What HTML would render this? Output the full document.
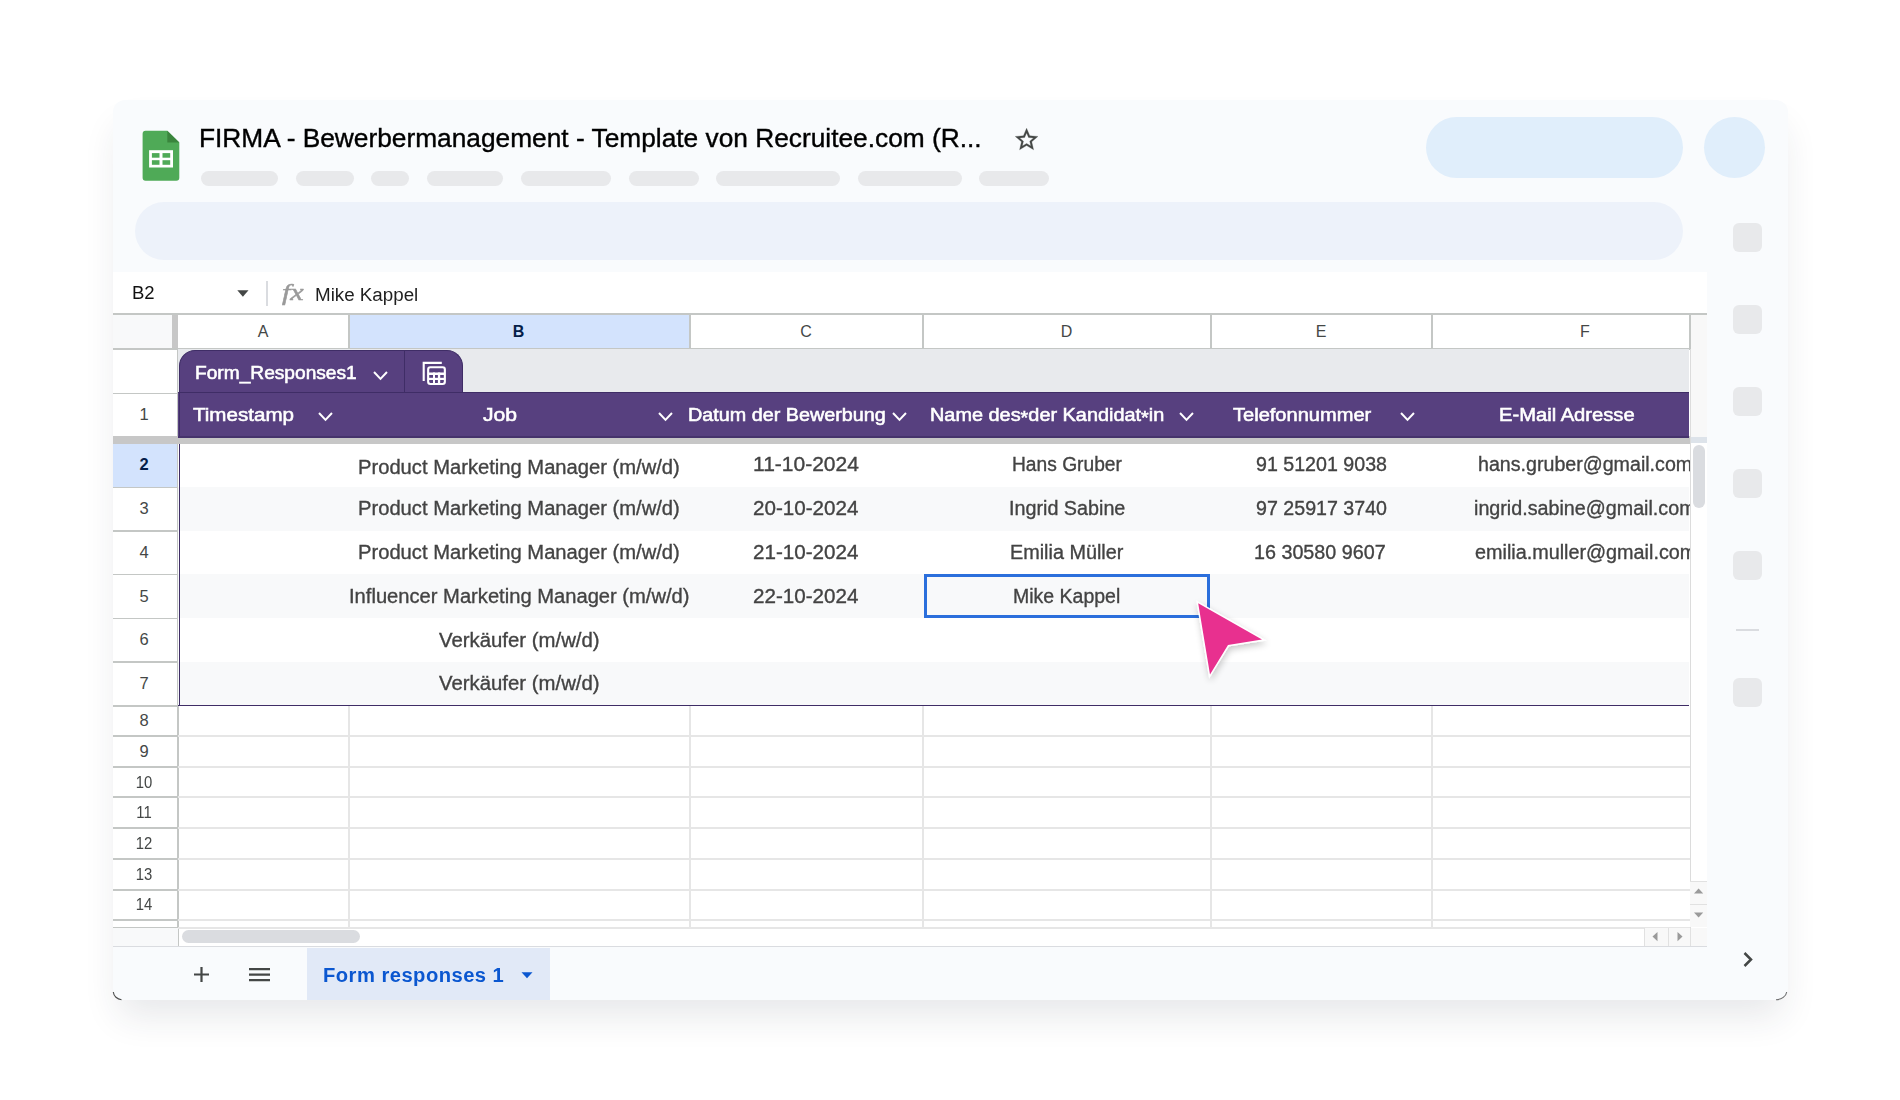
<!DOCTYPE html>
<html><head><meta charset="utf-8"><style>
html,body{margin:0;padding:0;width:1900px;height:1100px;background:#ffffff;overflow:hidden;}
body{position:relative;font-family:'Liberation Sans', sans-serif;}
.b{position:absolute;}
.t{position:absolute;line-height:1;white-space:nowrap;font-family:'Liberation Sans', sans-serif;}
</style></head><body>
<div class="b" style="left:113px;top:100px;width:1675px;height:900px;background:#f9fbfd;border-radius:12px;box-shadow:0 22px 36px -6px rgba(40,45,60,0.11);"></div>
<svg class="b" style="left:105px;top:985px;overflow:visible" width="30" height="20" viewBox="105 985 30 20"><path d="M113.3 992 A 9 8.5 0 0 0 121.5 999.7" fill="none" stroke="#222" stroke-width="1.1" opacity="0.8"/></svg>
<svg class="b" style="left:1765px;top:985px;overflow:visible" width="30" height="20" viewBox="1765 985 30 20"><path d="M1786.7 992 A 11 8.5 0 0 1 1776 999.7" fill="none" stroke="#333" stroke-width="1.1" opacity="0.7"/></svg>
<svg class="b" style="left:142px;top:130px" width="38" height="52" viewBox="0 0 38 52">
<path d="M3.6 0.7 H25.3 L37.3 12.4 V47.7 A3 3 0 0 1 34.3 50.7 H3.6 A3 3 0 0 1 0.6 47.7 V3.7 A3 3 0 0 1 3.6 0.7 Z" fill="#4faa57"/>
<path d="M25.3 0.7 L37.3 12.4 H25.3 Z" fill="#3a853d"/>
<rect x="7.1" y="20.2" width="23.9" height="17.3" fill="#fff"/>
<rect x="9.9" y="23.1" width="7.6" height="4.6" fill="#4faa57"/>
<rect x="20.5" y="23.1" width="7.7" height="4.6" fill="#4faa57"/>
<rect x="9.9" y="30.2" width="7.6" height="4.6" fill="#4faa57"/>
<rect x="20.5" y="30.2" width="7.7" height="4.6" fill="#4faa57"/>
</svg>
<div class="t f" style="left:198.73px;top:124.68px;font-size:26.6px;color:#000000;font-weight:normal;transform:scaleX(0.9885);transform-origin:0 0;-webkit-text-stroke:0.4px #000;">FIRMA - Bewerbermanagement - Template von Recruitee.com (R...</div>
<svg class="b" style="left:1012.5px;top:126.0px" width="27.2" height="27.2" viewBox="0 0 24 24"><path stroke="#444746" stroke-width="0.25" d="M22 9.24l-7.19-.62L12 2 9.19 8.63 2 9.24l5.46 4.73L5.82 21 12 17.27 18.18 21l-1.63-7.03L22 9.24zM12 15.4l-3.76 2.27 1-4.28-3.32-2.88 4.38-.38L12 6.1l1.71 4.04 4.38.38-3.32 2.88 1 4.28L12 15.4z" fill="#444746"/></svg>
<div class="b" style="left:201px;top:171px;width:77px;height:15px;background:#e8e9eb;border-radius:8px;"></div>
<div class="b" style="left:296px;top:171px;width:58px;height:15px;background:#e8e9eb;border-radius:8px;"></div>
<div class="b" style="left:371px;top:171px;width:38px;height:15px;background:#e8e9eb;border-radius:8px;"></div>
<div class="b" style="left:427px;top:171px;width:76px;height:15px;background:#e8e9eb;border-radius:8px;"></div>
<div class="b" style="left:521px;top:171px;width:90px;height:15px;background:#e8e9eb;border-radius:8px;"></div>
<div class="b" style="left:629px;top:171px;width:70px;height:15px;background:#e8e9eb;border-radius:8px;"></div>
<div class="b" style="left:716px;top:171px;width:124px;height:15px;background:#e8e9eb;border-radius:8px;"></div>
<div class="b" style="left:858px;top:171px;width:104px;height:15px;background:#e8e9eb;border-radius:8px;"></div>
<div class="b" style="left:979px;top:171px;width:70px;height:15px;background:#e8e9eb;border-radius:8px;"></div>
<div class="b" style="left:1426px;top:117px;width:257px;height:61px;background:#e0eefb;border-radius:31px;"></div>
<div class="b" style="left:1704px;top:117px;width:61px;height:61px;background:#e0eefb;border-radius:50%;"></div>
<div class="b" style="left:135px;top:202px;width:1548px;height:58px;background:#edf2fa;border-radius:29px;"></div>
<div class="b" style="left:1733px;top:223px;width:29px;height:29px;background:#e8e9eb;border-radius:6px;"></div>
<div class="b" style="left:1733px;top:305px;width:29px;height:29px;background:#e8e9eb;border-radius:6px;"></div>
<div class="b" style="left:1733px;top:387px;width:29px;height:29px;background:#e8e9eb;border-radius:6px;"></div>
<div class="b" style="left:1733px;top:469px;width:29px;height:29px;background:#e8e9eb;border-radius:6px;"></div>
<div class="b" style="left:1733px;top:551px;width:29px;height:29px;background:#e8e9eb;border-radius:6px;"></div>
<div class="b" style="left:1733px;top:678px;width:29px;height:29px;background:#e8e9eb;border-radius:6px;"></div>
<div class="b" style="left:1736px;top:629px;width:23px;height:2px;background:#dadce0;"></div>
<div class="b" style="left:113px;top:272px;width:1594px;height:674px;background:#ffffff;"></div>
<div class="t f" style="left:131.56px;top:282.92px;font-size:19px;color:#111111;font-weight:normal;transform:scaleX(0.9755);transform-origin:0 0;">B2</div>
<svg class="b" style="left:237px;top:289.5px" width="12" height="7" viewBox="0 0 12 7"><path d="M0.3 0.3 H11.5 L5.9 6.8 Z" fill="#444746"/></svg>
<div class="b" style="left:266px;top:281px;width:2px;height:25px;background:#dadce0;"></div>
<div class="t f" style="left:282.11px;top:279.68px;font-size:24px;color:#9a9a9a;font-weight:normal;transform:scaleX(1.2554);transform-origin:0 0;font-family:'Liberation Serif',serif;font-style:italic;-webkit-text-stroke:0.5px #9a9a9a;">fx</div>
<div class="t f" style="left:315.25px;top:285.66px;font-size:18px;color:#1f1f1f;font-weight:normal;transform:scaleX(1.0427);transform-origin:0 0;">Mike Kappel</div>
<div class="b" style="left:113px;top:314px;width:1594px;height:35px;background:#ffffff;"></div>
<div class="b" style="left:113px;top:314px;width:59px;height:35px;background:#f8f9fa;"></div>
<div class="b" style="left:172px;top:314px;width:6px;height:35px;background:#c7c7c7;"></div>
<div class="b" style="left:348px;top:314px;width:341px;height:35px;background:#d3e3fd;"></div>
<div class="b" style="left:1690px;top:314px;width:17px;height:123px;background:#f8f8f8;"></div>
<div class="b" style="left:113px;top:313px;width:1594px;height:2px;background:#c4c7c5;"></div>
<div class="b" style="left:113px;top:348px;width:1577px;height:1.5px;background:#c4c7c5;"></div>
<div class="b" style="left:348px;top:314px;width:1.5px;height:35px;background:#c4c7c5;"></div>
<div class="b" style="left:689px;top:314px;width:1.5px;height:35px;background:#c4c7c5;"></div>
<div class="b" style="left:922px;top:314px;width:1.5px;height:35px;background:#c4c7c5;"></div>
<div class="b" style="left:1210px;top:314px;width:1.5px;height:35px;background:#c4c7c5;"></div>
<div class="b" style="left:1431px;top:314px;width:1.5px;height:35px;background:#c4c7c5;"></div>
<div class="b" style="left:1689px;top:314px;width:1.5px;height:35px;background:#c4c7c5;"></div>
<div class="t" style="left:233.00px;top:324.46px;width:60px;text-align:center;font-size:16px;color:#444746;font-weight:normal;">A</div>
<div class="t" style="left:488.50px;top:324.46px;width:60px;text-align:center;font-size:16px;color:#041e49;font-weight:bold;">B</div>
<div class="t" style="left:776.00px;top:324.46px;width:60px;text-align:center;font-size:16px;color:#444746;font-weight:normal;">C</div>
<div class="t" style="left:1036.50px;top:324.46px;width:60px;text-align:center;font-size:16px;color:#444746;font-weight:normal;">D</div>
<div class="t" style="left:1291.00px;top:324.46px;width:60px;text-align:center;font-size:16px;color:#444746;font-weight:normal;">E</div>
<div class="t" style="left:1555.00px;top:324.46px;width:60px;text-align:center;font-size:16px;color:#444746;font-weight:normal;">F</div>
<div class="b" style="left:177px;top:349px;width:1.5px;height:597px;background:#c4c7c5;"></div>
<div class="b" style="left:178px;top:349px;width:1511px;height:44px;background:#e8eaed;"></div>
<div class="b" style="left:178px;top:392px;width:1511px;height:45px;background:#57407f;"></div>
<div class="b" style="left:178.5px;top:349.5px;width:284.5px;height:43.5px;box-sizing:border-box;background:#57407f;border:1px solid #3f2d66;border-bottom:none;border-radius:16px 16px 0 0;"></div>
<div class="b" style="left:404px;top:350px;width:1px;height:43px;background:#3f2d66;"></div>
<div class="b" style="left:178px;top:392px;width:1511px;height:1px;background:#3f2d66;"></div>
<div class="t f" style="left:195.34px;top:365.02px;font-size:17.7px;color:#ffffff;font-weight:normal;transform:scaleX(1.0822);transform-origin:0 0;-webkit-text-stroke:0.55px #fff;">Form_Responses1</div>
<svg class="b" style="left:372.8px;top:371px" width="15" height="9.6" viewBox="-1 -1 15 9.6"><path d="M0.7 0.7 L6.5 6.8999999999999995 L12.3 0.7" fill="none" stroke="#ffffff" stroke-width="2" stroke-linecap="square"/></svg>
<svg class="b" style="left:421px;top:361px" width="26" height="26" viewBox="0 0 26 26">
<path d="M2.7 19.9 V1.9 H20.8" fill="none" stroke="#fff" stroke-width="2.1"/>
<rect x="7.15" y="6.25" width="16.7" height="16.7" rx="2.2" fill="none" stroke="#fff" stroke-width="2.1"/>
<rect x="7.1" y="11.5" width="16.8" height="2.5" fill="#fff"/>
<rect x="7.1" y="16.8" width="16.8" height="2.2" fill="#fff"/>
<rect x="12" y="11.5" width="2" height="12" fill="#fff"/>
<rect x="16.9" y="11.5" width="2.3" height="12" fill="#fff"/>
</svg>
<div class="t f" style="left:193.06px;top:405.51px;font-size:18.3px;color:#fff;font-weight:normal;transform:scaleX(1.1252);transform-origin:0 0;-webkit-text-stroke:0.55px #fff;">Timestamp</div>
<svg class="b" style="left:317.5px;top:412px" width="15" height="9.6" viewBox="-1 -1 15 9.6"><path d="M0.7 0.7 L6.5 6.8999999999999995 L12.3 0.7" fill="none" stroke="#ffffff" stroke-width="2" stroke-linecap="square"/></svg>
<div class="t f" style="left:482.69px;top:405.51px;font-size:18.3px;color:#fff;font-weight:normal;transform:scaleX(1.1551);transform-origin:0 0;-webkit-text-stroke:0.55px #fff;">Job</div>
<svg class="b" style="left:657.8px;top:412px" width="15" height="9.6" viewBox="-1 -1 15 9.6"><path d="M0.7 0.7 L6.5 6.8999999999999995 L12.3 0.7" fill="none" stroke="#ffffff" stroke-width="2" stroke-linecap="square"/></svg>
<div class="t f" style="left:687.54px;top:405.51px;font-size:18.3px;color:#fff;font-weight:normal;transform:scaleX(1.0814);transform-origin:0 0;-webkit-text-stroke:0.55px #fff;">Datum der Bewerbung</div>
<svg class="b" style="left:891.5px;top:412px" width="15" height="9.6" viewBox="-1 -1 15 9.6"><path d="M0.7 0.7 L6.5 6.8999999999999995 L12.3 0.7" fill="none" stroke="#ffffff" stroke-width="2" stroke-linecap="square"/></svg>
<div class="t f" style="left:930.47px;top:405.51px;font-size:18.3px;color:#fff;font-weight:normal;transform:scaleX(1.0874);transform-origin:0 0;-webkit-text-stroke:0.55px #fff;">Name des<span style="position:relative;top:3.5px">*</span>der Kandidat<span style="position:relative;top:3.5px">*</span>in</div>
<svg class="b" style="left:1179.3px;top:412px" width="15" height="9.6" viewBox="-1 -1 15 9.6"><path d="M0.7 0.7 L6.5 6.8999999999999995 L12.3 0.7" fill="none" stroke="#ffffff" stroke-width="2" stroke-linecap="square"/></svg>
<div class="t f" style="left:1232.52px;top:405.51px;font-size:18.3px;color:#fff;font-weight:normal;transform:scaleX(1.0973);transform-origin:0 0;-webkit-text-stroke:0.55px #fff;">Telefonnummer</div>
<svg class="b" style="left:1400.4px;top:412px" width="15" height="9.6" viewBox="-1 -1 15 9.6"><path d="M0.7 0.7 L6.5 6.8999999999999995 L12.3 0.7" fill="none" stroke="#ffffff" stroke-width="2" stroke-linecap="square"/></svg>
<div class="t f" style="left:1499.38px;top:405.51px;font-size:18.3px;color:#fff;font-weight:normal;transform:scaleX(1.1036);transform-origin:0 0;-webkit-text-stroke:0.55px #fff;">E-Mail Adresse</div>
<div class="t" style="left:114.00px;top:406.03px;width:60px;text-align:center;font-size:16.5px;color:#444746;font-weight:normal;">1</div>
<div class="b" style="left:178px;top:443px;width:1511px;height:43.5px;background:#ffffff;"></div>
<div class="b" style="left:113px;top:486.0px;width:65px;height:1.5px;background:#c4c7c5;"></div>
<div class="b" style="left:178px;top:486.5px;width:1511px;height:44.0px;background:#f8f9fa;"></div>
<div class="b" style="left:113px;top:530.0px;width:65px;height:1.5px;background:#c4c7c5;"></div>
<div class="b" style="left:178px;top:530.5px;width:1511px;height:43.5px;background:#ffffff;"></div>
<div class="b" style="left:113px;top:573.5px;width:65px;height:1.5px;background:#c4c7c5;"></div>
<div class="b" style="left:178px;top:574px;width:1511px;height:44px;background:#f8f9fa;"></div>
<div class="b" style="left:113px;top:617.5px;width:65px;height:1.5px;background:#c4c7c5;"></div>
<div class="b" style="left:178px;top:618px;width:1511px;height:43.5px;background:#ffffff;"></div>
<div class="b" style="left:113px;top:661.0px;width:65px;height:1.5px;background:#c4c7c5;"></div>
<div class="b" style="left:178px;top:661.5px;width:1511px;height:44.0px;background:#f8f9fa;"></div>
<div class="b" style="left:113px;top:705.0px;width:65px;height:1.5px;background:#c4c7c5;"></div>
<div class="b" style="left:113px;top:392.5px;width:65px;height:1.5px;background:#c4c7c5;"></div>
<div class="b" style="left:113px;top:443px;width:64px;height:43.5px;background:#d3e3fd;"></div>
<div class="t" style="left:114.00px;top:456.03px;width:60px;text-align:center;font-size:16.5px;color:#041e49;font-weight:bold;">2</div>
<div class="t" style="left:114.00px;top:500.03px;width:60px;text-align:center;font-size:16.5px;color:#444746;font-weight:normal;">3</div>
<div class="t" style="left:114.00px;top:544.03px;width:60px;text-align:center;font-size:16.5px;color:#444746;font-weight:normal;">4</div>
<div class="t" style="left:114.00px;top:587.53px;width:60px;text-align:center;font-size:16.5px;color:#444746;font-weight:normal;">5</div>
<div class="t" style="left:114.00px;top:631.03px;width:60px;text-align:center;font-size:16.5px;color:#444746;font-weight:normal;">6</div>
<div class="t" style="left:114.00px;top:675.03px;width:60px;text-align:center;font-size:16.5px;color:#444746;font-weight:normal;">7</div>
<div class="b" style="left:178.6px;top:392px;width:1.4px;height:314px;background:#3f2d66;"></div>
<div class="b" style="left:178px;top:704.5px;width:1511px;height:1.5px;background:#3f2d66;"></div>
<div class="b" style="left:113px;top:436px;width:1577px;height:7.5px;background:#c7c7c7;"></div>
<div class="b" style="left:178px;top:436px;width:1511px;height:1.7px;background:#46336c;"></div>
<div class="b" style="left:1690px;top:437px;width:17px;height:6px;background:#dde3ea;"></div>
<div class="t f" style="left:357.99px;top:457.07px;font-size:20px;color:#434343;font-weight:normal;transform:scaleX(1.0088);transform-origin:0 0;-webkit-text-stroke:0.35px #434343;">Product Marketing Manager (m/w/d)</div>
<div class="t f" style="left:357.99px;top:498.07px;font-size:20px;color:#434343;font-weight:normal;transform:scaleX(1.0088);transform-origin:0 0;-webkit-text-stroke:0.35px #434343;">Product Marketing Manager (m/w/d)</div>
<div class="t f" style="left:357.99px;top:542.07px;font-size:20px;color:#434343;font-weight:normal;transform:scaleX(1.0088);transform-origin:0 0;-webkit-text-stroke:0.35px #434343;">Product Marketing Manager (m/w/d)</div>
<div class="t f" style="left:348.80px;top:586.07px;font-size:20px;color:#434343;font-weight:normal;transform:scaleX(1.0078);transform-origin:0 0;-webkit-text-stroke:0.35px #434343;">Influencer Marketing Manager (m/w/d)</div>
<div class="t f" style="left:438.96px;top:629.67px;font-size:20px;color:#434343;font-weight:normal;transform:scaleX(1.0175);transform-origin:0 0;-webkit-text-stroke:0.35px #434343;">Verkäufer (m/w/d)</div>
<div class="t f" style="left:438.96px;top:673.27px;font-size:20px;color:#434343;font-weight:normal;transform:scaleX(1.0175);transform-origin:0 0;-webkit-text-stroke:0.35px #434343;">Verkäufer (m/w/d)</div>
<div class="t f" style="left:753.29px;top:454.07px;font-size:20px;color:#434343;font-weight:normal;transform:scaleX(1.0506);transform-origin:0 0;-webkit-text-stroke:0.35px #434343;">11-10-2024</div>
<div class="t f" style="left:1011.59px;top:454.07px;font-size:20px;color:#434343;font-weight:normal;transform:scaleX(0.9597);transform-origin:0 0;-webkit-text-stroke:0.35px #434343;">Hans Gruber</div>
<div class="t f" style="left:1255.51px;top:454.07px;font-size:20px;color:#434343;font-weight:normal;transform:scaleX(0.9814);transform-origin:0 0;-webkit-text-stroke:0.35px #434343;">91 51201 9038</div>
<div class="t f" style="left:753.25px;top:498.07px;font-size:20px;color:#434343;font-weight:normal;transform:scaleX(1.0301);transform-origin:0 0;-webkit-text-stroke:0.35px #434343;">20-10-2024</div>
<div class="t f" style="left:1008.99px;top:498.07px;font-size:20px;color:#434343;font-weight:normal;transform:scaleX(0.9871);transform-origin:0 0;-webkit-text-stroke:0.35px #434343;">Ingrid Sabine</div>
<div class="t f" style="left:1255.52px;top:498.07px;font-size:20px;color:#434343;font-weight:normal;transform:scaleX(0.9818);transform-origin:0 0;-webkit-text-stroke:0.35px #434343;">97 25917 3740</div>
<div class="t f" style="left:753.25px;top:542.07px;font-size:20px;color:#434343;font-weight:normal;transform:scaleX(1.0301);transform-origin:0 0;-webkit-text-stroke:0.35px #434343;">21-10-2024</div>
<div class="t f" style="left:1010.12px;top:542.07px;font-size:20px;color:#434343;font-weight:normal;transform:scaleX(0.9899);transform-origin:0 0;-webkit-text-stroke:0.35px #434343;">Emilia Müller</div>
<div class="t f" style="left:1254.40px;top:542.07px;font-size:20px;color:#434343;font-weight:normal;transform:scaleX(0.9860);transform-origin:0 0;-webkit-text-stroke:0.35px #434343;">16 30580 9607</div>
<div class="t f" style="left:753.25px;top:585.57px;font-size:20px;color:#434343;font-weight:normal;transform:scaleX(1.0301);transform-origin:0 0;-webkit-text-stroke:0.35px #434343;">22-10-2024</div>
<div class="t f" style="left:1013.48px;top:585.57px;font-size:20px;color:#434343;font-weight:normal;transform:scaleX(0.9742);transform-origin:0 0;-webkit-text-stroke:0.35px #434343;">Mike Kappel</div>
<div class="b" style="left:0px;top:0px;width:1689.5px;height:1100px;overflow:hidden">
<div class="t f" style="left:1478.13px;top:454.07px;font-size:20px;color:#434343;font-weight:normal;transform:scaleX(0.9816);transform-origin:0 0;-webkit-text-stroke:0.35px #434343;">hans.gruber@gmail.com</div>
<div class="t f" style="left:1473.99px;top:498.07px;font-size:20px;color:#434343;font-weight:normal;transform:scaleX(0.9854);transform-origin:0 0;-webkit-text-stroke:0.35px #434343;">ingrid.sabine@gmail.com</div>
<div class="t f" style="left:1474.70px;top:542.07px;font-size:20px;color:#434343;font-weight:normal;transform:scaleX(0.9892);transform-origin:0 0;-webkit-text-stroke:0.35px #434343;">emilia.muller@gmail.com</div>
</div>
<div class="b" style="left:1689.5px;top:349px;width:1.2px;height:579px;background:#dcdcdc;"></div>
<div class="b" style="left:113px;top:735px;width:1577px;height:2px;background:#e6e6e6;"></div>
<div class="b" style="left:113px;top:735.25px;width:65px;height:1.5px;background:#c4c7c5;"></div>
<div class="b" style="left:113px;top:766px;width:1577px;height:2px;background:#e6e6e6;"></div>
<div class="b" style="left:113px;top:766.25px;width:65px;height:1.5px;background:#c4c7c5;"></div>
<div class="b" style="left:113px;top:796px;width:1577px;height:2px;background:#e6e6e6;"></div>
<div class="b" style="left:113px;top:796.25px;width:65px;height:1.5px;background:#c4c7c5;"></div>
<div class="b" style="left:113px;top:827px;width:1577px;height:2px;background:#e6e6e6;"></div>
<div class="b" style="left:113px;top:827.25px;width:65px;height:1.5px;background:#c4c7c5;"></div>
<div class="b" style="left:113px;top:858px;width:1577px;height:2px;background:#e6e6e6;"></div>
<div class="b" style="left:113px;top:858.25px;width:65px;height:1.5px;background:#c4c7c5;"></div>
<div class="b" style="left:113px;top:889px;width:1577px;height:2px;background:#e6e6e6;"></div>
<div class="b" style="left:113px;top:889.25px;width:65px;height:1.5px;background:#c4c7c5;"></div>
<div class="b" style="left:113px;top:919px;width:1577px;height:2px;background:#e6e6e6;"></div>
<div class="b" style="left:113px;top:919.25px;width:65px;height:1.5px;background:#c4c7c5;"></div>
<div class="b" style="left:113px;top:927px;width:1577px;height:2px;background:#e6e6e6;"></div>
<div class="b" style="left:113px;top:927.25px;width:65px;height:1.5px;background:#c4c7c5;"></div>
<div class="b" style="left:348px;top:706px;width:2px;height:222px;background:#e6e6e6;"></div>
<div class="b" style="left:689px;top:706px;width:2px;height:222px;background:#e6e6e6;"></div>
<div class="b" style="left:922px;top:706px;width:2px;height:222px;background:#e6e6e6;"></div>
<div class="b" style="left:1210px;top:706px;width:2px;height:222px;background:#e6e6e6;"></div>
<div class="b" style="left:1431px;top:706px;width:2px;height:222px;background:#e6e6e6;"></div>
<div class="t" style="left:114.00px;top:712.23px;width:60px;text-align:center;font-size:16.5px;color:#444746;font-weight:normal;">8</div>
<div class="t" style="left:114.00px;top:742.98px;width:60px;text-align:center;font-size:16.5px;color:#444746;font-weight:normal;">9</div>
<div class="t" style="left:114.00px;top:773.58px;width:60px;text-align:center;font-size:16.5px;color:#444746;font-weight:normal;transform:scaleX(0.9);">10</div>
<div class="t" style="left:114.00px;top:804.23px;width:60px;text-align:center;font-size:16.5px;color:#444746;font-weight:normal;transform:scaleX(0.9);">11</div>
<div class="t" style="left:114.00px;top:834.98px;width:60px;text-align:center;font-size:16.5px;color:#444746;font-weight:normal;transform:scaleX(0.9);">12</div>
<div class="t" style="left:114.00px;top:865.63px;width:60px;text-align:center;font-size:16.5px;color:#444746;font-weight:normal;transform:scaleX(0.9);">13</div>
<div class="t" style="left:114.00px;top:896.28px;width:60px;text-align:center;font-size:16.5px;color:#444746;font-weight:normal;transform:scaleX(0.9);">14</div>
<div class="b" style="left:113px;top:928px;width:65px;height:18px;background:#f8f9fa;"></div>
<div class="b" style="left:182px;top:930px;width:178px;height:13px;background:#dadce0;border-radius:7px;"></div>
<div class="b" style="left:113px;top:945.5px;width:1594px;height:1.5px;background:#dadce0;"></div>
<div class="b" style="left:1692.5px;top:445px;width:12.5px;height:63px;background:#dadce0;border-radius:6px;"></div>
<div class="b" style="left:1690px;top:881px;width:17px;height:46px;background:#f8f8f8;"></div>
<div class="b" style="left:1690px;top:880.5px;width:17px;height:1px;background:#e1e1e1;"></div>
<div class="b" style="left:1690px;top:904px;width:17px;height:1px;background:#e1e1e1;"></div>
<svg class="b" style="left:1694px;top:888px" width="10" height="6"><path d="M0 5.5 L4.6 0.5 L9.2 5.5Z" fill="#9a9a9a"/></svg>
<svg class="b" style="left:1694px;top:912px" width="10" height="6"><path d="M0 0.5 L4.6 5.5 L9.2 0.5Z" fill="#9a9a9a"/></svg>
<div class="b" style="left:1644.5px;top:928px;width:62.5px;height:18px;background:#f8f8f8;"></div>
<div class="b" style="left:1644px;top:928px;width:1px;height:18px;background:#e1e1e1;"></div>
<div class="b" style="left:1667.5px;top:928px;width:1px;height:18px;background:#e1e1e1;"></div>
<div class="b" style="left:1689.5px;top:928px;width:1px;height:18px;background:#e1e1e1;"></div>
<svg class="b" style="left:1652px;top:932px" width="6" height="10"><path d="M5.5 0 L0.5 4.6 L5.5 9.2Z" fill="#9a9a9a"/></svg>
<svg class="b" style="left:1676.5px;top:932px" width="6" height="10"><path d="M0.5 0 L5.5 4.6 L0.5 9.2Z" fill="#9a9a9a"/></svg>
<div class="b" style="left:306.5px;top:947.5px;width:243.5px;height:52.5px;background:#e1e9f7;"></div>
<svg class="b" style="left:193px;top:966px" width="17" height="17" viewBox="0 0 17 17"><path d="M8.5 1 V16 M1 8.5 H16" stroke="#444746" stroke-width="2.2"/></svg>
<svg class="b" style="left:249px;top:967px" width="22" height="15" viewBox="0 0 22 15"><path d="M0 2.2 H21 M0 7.7 H21 M0 13.2 H21" stroke="#444746" stroke-width="2.2"/></svg>
<div class="t f" style="left:323.24px;top:966.29px;font-size:19.5px;color:#0b57d0;font-weight:bold;transform:scaleX(1.0350);transform-origin:0 0;letter-spacing:0.45px;">Form responses 1</div>
<svg class="b" style="left:521px;top:972px" width="12" height="7" viewBox="0 0 12 7"><path d="M0.5 0.2 H11.5 L6 6.2 Z" fill="#0b57d0"/></svg>
<svg class="b" style="left:1741px;top:951px" width="14" height="17" viewBox="0 0 14 17"><path d="M3.5 2 L10 8.5 L3.5 15" fill="none" stroke="#444746" stroke-width="2.5"/></svg>
<div class="b" style="left:923.5px;top:574.2px;width:286.8px;height:43.7px;box-sizing:border-box;border:3px solid #2b6fdc;"></div>
<svg class="b" style="left:1180px;top:590px;overflow:visible" width="100" height="100" viewBox="1180 590 100 100">
<defs><filter id="sh" x="-50%" y="-50%" width="200%" height="200%"><feGaussianBlur in="SourceAlpha" stdDeviation="3.5"/><feOffset dx="1" dy="3"/><feComponentTransfer><feFuncA type="linear" slope="0.22"/></feComponentTransfer><feMerge><feMergeNode/><feMergeNode in="SourceGraphic"/></feMerge></filter></defs>
<path d="M1198.2 603.2 L1262 639.6 L1228 644.9 L1210 674.4 Z" fill="#ffffff" stroke="#ffffff" stroke-width="3" stroke-linejoin="miter" stroke-miterlimit="10" filter="url(#sh)"/>
<path d="M1198.2 603.2 L1262 639.6 L1228 644.9 L1210 674.4 Z" fill="#e8308f"/>
</svg>
</body></html>
